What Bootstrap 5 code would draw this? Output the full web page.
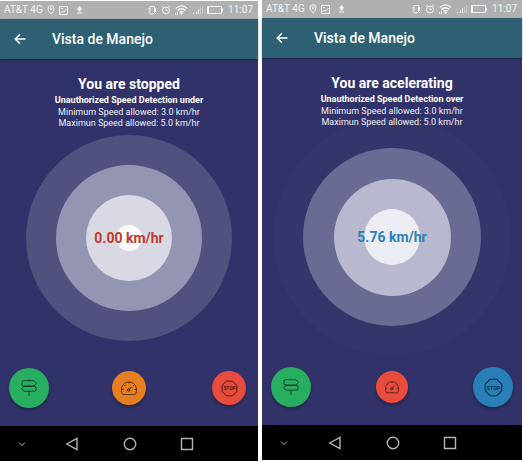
<!DOCTYPE html>
<html lang="es">
<head>
<meta charset="utf-8">
<meta name="viewport" content="width=device-width, initial-scale=1">
<title>Vista de Manejo</title>
<link href="https://cdn.jsdelivr.net/npm/bootstrap@5.3.0/dist/css/bootstrap.min.css" rel="stylesheet">
<style>
body { font-family: Roboto, "Liberation Sans", sans-serif; background: #fff; }
svg { display: block; fill: none; stroke: currentColor; }
.screens { display: grid; grid-template-columns: 258fr 260fr; gap: 4px; padding-right: 1px; }
.phone { background: #303269; color: #fff; }
.idle { margin-top: 1px; }
.status-bar { height: 18px; background: #b0b0b0; color: #f4f4f4; font-size: 10px; line-height: 18px; padding: 0 5px 0 4px; }
.left-icons { gap: 4px; }
.left-icons .upload { margin-left: 4px; }
.right-icons { gap: 4px; }
.app-bar { height: 40px; background: #2d6072; padding: 0 14px; gap: 26px; box-shadow: 0 1px 2px rgba(0,0,0,.35); }
.app-bar h1 { font-size: 14px; font-weight: 500; line-height: 20px; }
.plain-btn { background: none; border: 0; padding: 0; color: inherit; }
.readout { padding-top: 16px; }
.readout h2 { font-size: 14px; font-weight: 700; line-height: 18px; }
.readout .alert-line { font-size: 9px; font-weight: 700; line-height: 14px; }
.readout .limit { font-size: 9px; line-height: 11px; color: #f0f0f8; }
.dial { display: grid; grid-template: 206px / 100%; place-items: center; margin-top: 6px; }
.dial > * { grid-area: 1 / 1; }
.ring { border-radius: 50%; aspect-ratio: 1; }
.speed { font-size: 14px; font-weight: 700; line-height: 20px; }
.idle .r1 { width: 206px; background: #50517f; }
.idle .r2 { width: 146px; background: #9495b3; }
.idle .r3 { width: 86px; background: #d9d9e4; }
.idle .r4 { width: 26px; background: #fbfbfd; }
.idle .speed { color: #c0392b; }
.moving .r1 { width: 238px; background: rgba(255,255,255,.016); }
.moving .r2 { width: 178px; background: #6a6b94; }
.moving .r3 { width: 117px; background: #b8b9ce; }
.moving .r4 { width: 56px; background: #ecedf3; }
.moving .speed { color: #2980b9; }
.actions { padding: 27px 9px 18px; }
.slot { width: 40px; height: 40px; }
.fab { border: 0; padding: 0; border-radius: 50%; width: 34px; height: 34px; color: rgba(0,0,0,.7); box-shadow: 0 2px 3px rgba(0,0,0,.3); }
.fab.large { width: 40px; height: 40px; }
.fab.compact { width: 32px; height: 32px; }
.green { background: #27ae60; }
.orange { background: #e67e22; }
.red { background: #e74c3c; }
.blue { background: #2980b9; }
.nav-keys { display: grid; grid-template-columns: 43fr 58fr 57fr 57fr 43fr; height: 35px; background: #000; color: #b5b5b5; }
.stop-label { font: 700 5px Roboto, sans-serif; fill: currentColor; stroke: none; }
</style>
</head>
<body>
<svg width="0" height="0" class="position-absolute" aria-hidden="true">
  <symbol id="pin" viewBox="0 0 8 10"><path d="M4 9C2.500 7 1 5.400 1 3.700a3 3 0 0 1 6 0C7 5.400 5.500 7 4 9Z"/><circle cx="4" cy="3.700" r="1"/></symbol>
  <symbol id="photo" viewBox="0 0 9 9"><path d="M.5.5h8v8h-8zM1.500 7l2-2 1.300 1L7.500 3M2 2.500h2"/></symbol>
  <symbol id="upload" viewBox="0 0 7 8"><path fill="currentColor" stroke="none" d="M3.500 0 6.500 3.500H4.700v2H2.300v-2H.5zM1 6.500h5v1H1z"/></symbol>
  <symbol id="vibrate" viewBox="0 0 9 10"><path d="M2 1.500h4.500v6L5 9H2.500L1 7.500 2 6zM7.500 3v4M1 3v1.500M6.500 7.500 8 9"/></symbol>
  <symbol id="alarm" viewBox="0 0 10 10"><circle cx="5" cy="5.500" r="3.500"/><path d="M5 3.500v2h1.700M.7 2.300 2.700.7M9.300 2.300 7.300.7"/></symbol>
  <symbol id="wifi" viewBox="0 0 13 10"><path stroke-width="1.300" d="M.8 3.500c3.500-3.200 7.900-3.200 11.400 0M2.600 5.500c2.400-2.200 5.400-2.200 7.800 0M4.500 7.300c1.300-1 2.700-1 4 0"/><circle cx="6.500" cy="8.600" r=".8" fill="currentColor"/><path d="M2.500 7v3M.7 8v2"/></symbol>
  <symbol id="signal" viewBox="0 0 11 10"><path d="M1.500 9V8M4.500 9V6.500M6.500 9V4.500"/><path opacity=".45" d="M8.500 9V2.500M10.500 9V1"/></symbol>
  <symbol id="battery" viewBox="0 0 17 8"><path d="M.5.5h14v7H.5zM15.500 2.500v3"/><path fill="currentColor" stroke="none" d="M1 1h1v6H1z"/></symbol>
  <symbol id="back" viewBox="0 0 12 12"><path stroke-width="1.500" d="M11.500 6H1.300M6 1.200 1.200 6 6 10.800"/></symbol>
  <symbol id="signpost" viewBox="0 0 18 18"><path stroke-width=".8" d="M9 .5v1.200M3.500 1.700H14l2.500 2.600L14 7H3.500Q2 7 2 5.500V3.200q0-1.500 1.500-1.500ZM15 7.500H4L1.500 9.800 4 12.200h11q1 0 1-1V8.500q0-1-1-1ZM9 12.200V17"/></symbol>
  <symbol id="gauge" viewBox="0 0 18 16"><path stroke-width=".8" d="M2.800 14.500Q1.500 13.500 1.500 10C1.500 5.500 4.500 2 9 2s7.500 3.500 7.500 8q0 3.500-1.300 4.500ZM1.500 9.500h2M14.500 9.500h2M3.700 4.700l1.300 1.300M14.300 4.700 13 6M9 2v1.800"/><circle cx="8.700" cy="10" r="1.200"/><path d="m9.600 9 2-2.200"/></symbol>
  <symbol id="octagon" viewBox="0 0 18 18"><path d="M5.800 1.200h6.400l4.600 4.600v6.400l-4.600 4.600H5.800l-4.600-4.600V5.800Z"/></symbol>
  <symbol id="chevron" viewBox="0 0 8 6"><path d="m1 1.500 3 3 3-3"/></symbol>
  <symbol id="triangle" viewBox="0 0 14 14"><path stroke-width="1.400" d="M12 1.500v11L1.800 7Z"/></symbol>
  <symbol id="ring" viewBox="0 0 14 14"><circle cx="7" cy="7" r="5.700" stroke-width="1.400"/></symbol>
  <symbol id="square" viewBox="0 0 14 14"><path stroke-width="1.400" d="M1.500 1.500h11v11h-11z"/></symbol>
</svg>

<main class="screens align-items-start">
  <section class="phone idle">
    <div class="status-bar d-flex justify-content-between align-items-center">
      <div class="left-icons d-flex align-items-center">
        <span>AT&amp;T 4G</span>
        <svg width="8" height="10"><use href="#pin"/></svg>
        <svg width="9" height="9"><use href="#photo"/></svg>
        <svg class="upload" width="7" height="8"><use href="#upload"/></svg>
      </div>
      <div class="right-icons d-flex align-items-center">
        <svg width="9" height="10"><use href="#vibrate"/></svg>
        <svg width="10" height="10"><use href="#alarm"/></svg>
        <svg width="13" height="10"><use href="#wifi"/></svg>
        <svg width="11" height="10"><use href="#signal"/></svg>
        <svg width="17" height="8"><use href="#battery"/></svg>
        <span>11:07</span>
      </div>
    </div>
    <header class="app-bar d-flex align-items-center">
      <button class="plain-btn" type="button" aria-label="Volver"><svg width="12" height="12"><use href="#back"/></svg></button>
      <h1 class="mb-0">Vista de Manejo</h1>
    </header>
    <div class="readout text-center">
      <h2 class="mb-0">You are stopped</h2>
      <p class="alert-line mb-0">Unauthorized Speed Detection under</p>
      <p class="limit mb-0">Minimum Speed allowed: 3.0 km/hr</p>
      <p class="limit mb-0">Maximun Speed allowed: 5.0 km/hr</p>
    </div>
    <div class="dial">
      <div class="ring r1"></div><div class="ring r2"></div><div class="ring r3"></div><div class="ring r4"></div>
      <div class="speed">0.00 km/hr</div>
    </div>
    <div class="actions d-flex justify-content-between">
      <div class="slot d-flex align-items-center justify-content-center"><button class="fab large green d-flex align-items-center justify-content-center" type="button" aria-label="Ruta"><svg width="18" height="18"><use href="#signpost"/></svg></button></div>
      <div class="slot d-flex align-items-center justify-content-center"><button class="fab orange d-flex align-items-center justify-content-center" type="button" aria-label="Velocidad"><svg width="18" height="16"><use href="#gauge"/></svg></button></div>
      <div class="slot d-flex align-items-center justify-content-center"><button class="fab red d-flex align-items-center justify-content-center" type="button" aria-label="Detener"><svg width="17" height="17" viewBox="0 0 18 18"><use href="#octagon"/><text class="stop-label" x="9" y="11" text-anchor="middle">STOP</text></svg></button></div>
    </div>
    <nav class="nav-keys" aria-label="Sistema">
      <button class="plain-btn d-flex align-items-center justify-content-center" type="button" aria-label="Ocultar"><svg width="8" height="6"><use href="#chevron"/></svg></button>
      <button class="plain-btn d-flex align-items-center justify-content-center" type="button" aria-label="Atrás"><svg width="14" height="14"><use href="#triangle"/></svg></button>
      <button class="plain-btn d-flex align-items-center justify-content-center" type="button" aria-label="Inicio"><svg width="14" height="14"><use href="#ring"/></svg></button>
      <button class="plain-btn d-flex align-items-center justify-content-center" type="button" aria-label="Recientes"><svg width="14" height="14"><use href="#square"/></svg></button>
    </nav>
  </section>

  <section class="phone moving">
    <div class="status-bar d-flex justify-content-between align-items-center">
      <div class="left-icons d-flex align-items-center">
        <span>AT&amp;T 4G</span>
        <svg width="8" height="10"><use href="#pin"/></svg>
        <svg width="9" height="9"><use href="#photo"/></svg>
        <svg class="upload" width="7" height="8"><use href="#upload"/></svg>
      </div>
      <div class="right-icons d-flex align-items-center">
        <svg width="9" height="10"><use href="#vibrate"/></svg>
        <svg width="10" height="10"><use href="#alarm"/></svg>
        <svg width="13" height="10"><use href="#wifi"/></svg>
        <svg width="11" height="10"><use href="#signal"/></svg>
        <svg width="17" height="8"><use href="#battery"/></svg>
        <span>11:07</span>
      </div>
    </div>
    <header class="app-bar d-flex align-items-center">
      <button class="plain-btn" type="button" aria-label="Volver"><svg width="12" height="12"><use href="#back"/></svg></button>
      <h1 class="mb-0">Vista de Manejo</h1>
    </header>
    <div class="readout text-center">
      <h2 class="mb-0">You are acelerating</h2>
      <p class="alert-line mb-0">Unauthorized Speed Detection over</p>
      <p class="limit mb-0">Minimum Speed allowed: 3.0 km/hr</p>
      <p class="limit mb-0">Maximun Speed allowed: 5.0 km/hr</p>
    </div>
    <div class="dial">
      <div class="ring r1"></div><div class="ring r2"></div><div class="ring r3"></div><div class="ring r4"></div>
      <div class="speed">5.76 km/hr</div>
    </div>
    <div class="actions d-flex justify-content-between">
      <div class="slot d-flex align-items-center justify-content-center"><button class="fab large green d-flex align-items-center justify-content-center" type="button" aria-label="Ruta"><svg width="18" height="18"><use href="#signpost"/></svg></button></div>
      <div class="slot d-flex align-items-center justify-content-center"><button class="fab compact red d-flex align-items-center justify-content-center" type="button" aria-label="Velocidad"><svg width="16" height="14"><use href="#gauge"/></svg></button></div>
      <div class="slot d-flex align-items-center justify-content-center"><button class="fab large blue d-flex align-items-center justify-content-center" type="button" aria-label="Detener"><svg width="19" height="19" viewBox="0 0 18 18"><use href="#octagon"/><text class="stop-label" x="9" y="11" text-anchor="middle">STOP</text></svg></button></div>
    </div>
    <nav class="nav-keys" aria-label="Sistema">
      <button class="plain-btn d-flex align-items-center justify-content-center" type="button" aria-label="Ocultar"><svg width="8" height="6"><use href="#chevron"/></svg></button>
      <button class="plain-btn d-flex align-items-center justify-content-center" type="button" aria-label="Atrás"><svg width="14" height="14"><use href="#triangle"/></svg></button>
      <button class="plain-btn d-flex align-items-center justify-content-center" type="button" aria-label="Inicio"><svg width="14" height="14"><use href="#ring"/></svg></button>
      <button class="plain-btn d-flex align-items-center justify-content-center" type="button" aria-label="Recientes"><svg width="14" height="14"><use href="#square"/></svg></button>
    </nav>
  </section>
</main>
<script src="https://cdn.jsdelivr.net/npm/bootstrap@5.3.0/dist/js/bootstrap.bundle.min.js"></script>
</body>
</html>
